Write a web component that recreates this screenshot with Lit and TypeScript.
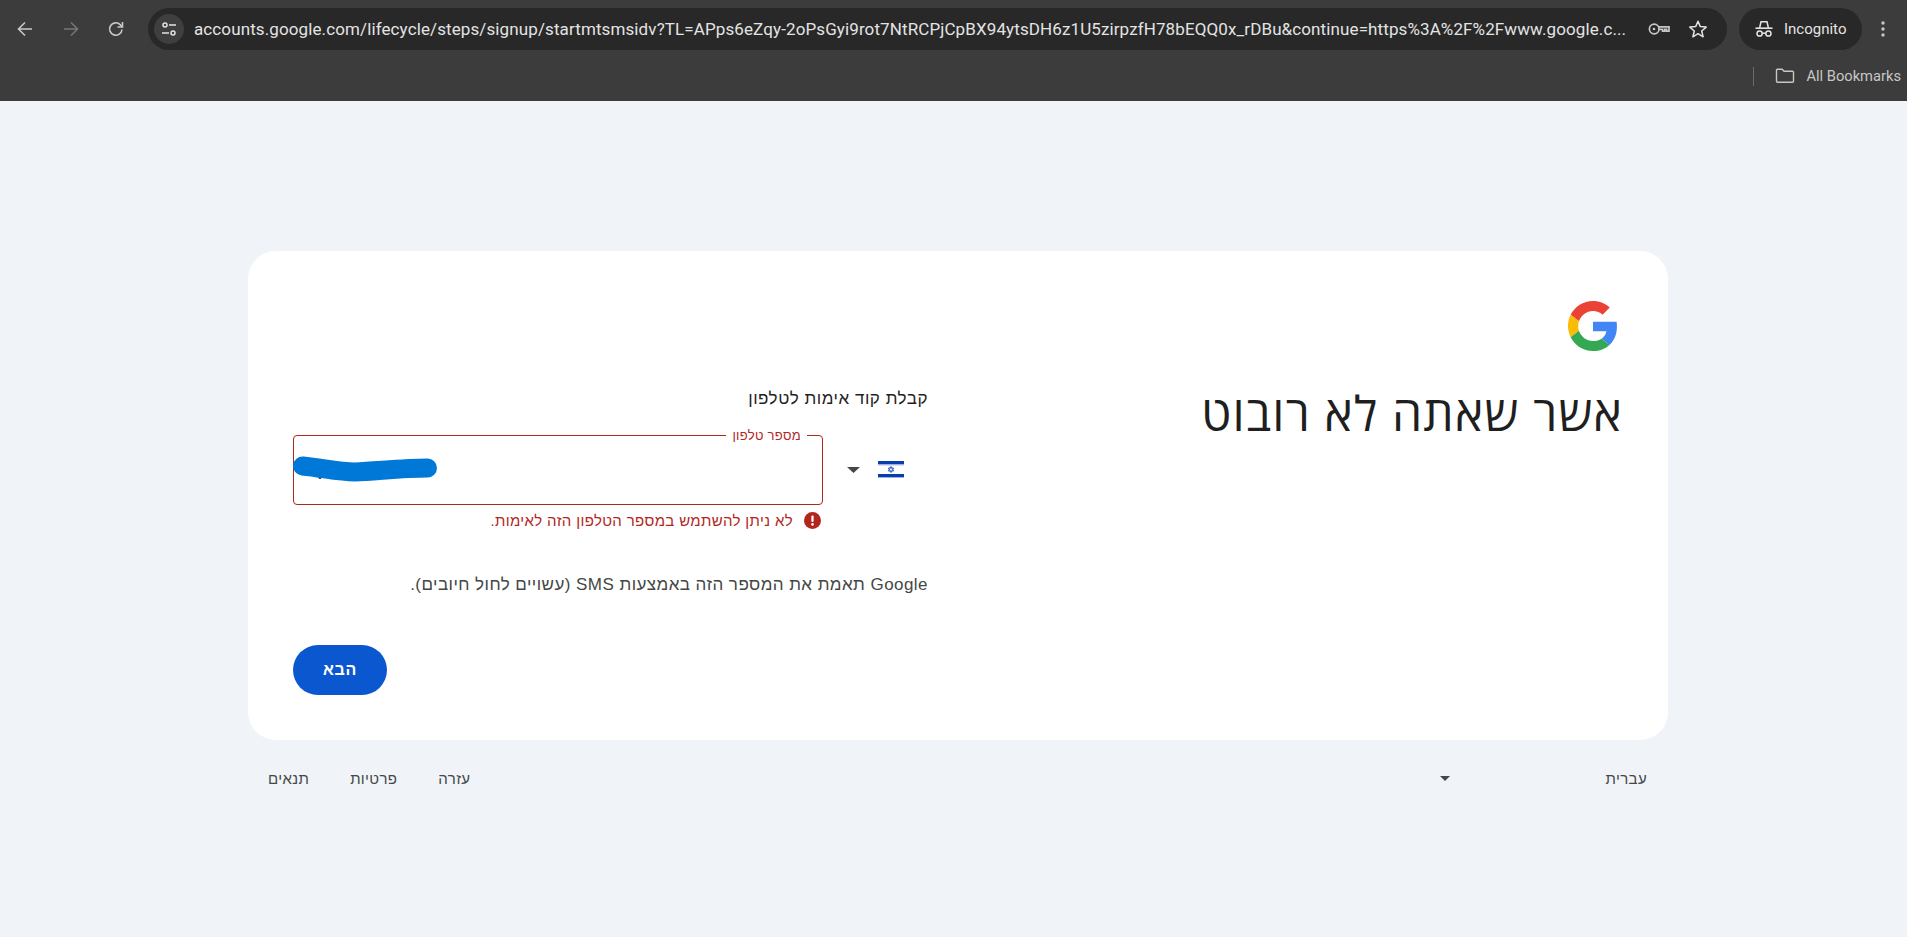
import { LitElement, html, css } from "lit";
import { customElement } from "lit/decorators.js";

const URL_TEXT =
  "accounts.google.com/lifecycle/steps/signup/startmtsmsidv?TL=APps6eZqy-2oPsGyi9rot7NtRCPjCpBX94ytsDH6z1U5zirpzfH78bEQQ0x_rDBu&continue=https%3A%2F%2Fwww.google.c...";

@customElement("app-root")
export class AppRoot extends LitElement {
  static styles = css`
    :host {
      display: block;
      min-height: 937px;
      background: #f0f4f9;
      font-family: "Liberation Sans", Arial, sans-serif;
      color: #1f1f1f;
    }
    svg { display: block; flex: none; }
    .chrome {
      height: 101px;
      background: #3c3c3c;
      box-sizing: border-box;
      padding-top: 8px;
      font-family: Roboto, "Open Sans", sans-serif;
    }
    .toolbar { display: flex; align-items: center; height: 42px; padding-left: 2.5px; }
    .nav { width: 45.5px; display: flex; justify-content: center; }
    .omnibox {
      margin-left: 9px;
      width: 1579px;
      height: 42px;
      border-radius: 21px;
      background: #282828;
      display: flex;
      align-items: center;
      box-sizing: border-box;
      padding: 0 19px 0 6px;
    }
    .chip {
      width: 30px; height: 30px; border-radius: 50%;
      background: #3f3f3f;
      display: flex; align-items: center; justify-content: center;
      flex: none;
    }
    .url {
      margin-left: 10px;
      flex: 1;
      font-size: 17px;
      letter-spacing: 0.11px;
      color: #e3e3e3;
      white-space: nowrap;
      overflow: hidden;
    }
    .omni-icons { display: flex; align-items: center; gap: 18px; }
    .incognito {
      margin-left: 12px;
      width: 123px; height: 42px;
      border-radius: 21px;
      background: #282828;
      display: flex; align-items: center;
      box-sizing: border-box;
      padding-left: 15px;
      gap: 10px;
      font-size: 15px;
      color: #e3e3e3;
      flex: none;
    }
    .dots { margin-left: 19px; }
    .bookmarks {
      display: flex; align-items: center; justify-content: flex-end;
      height: 26px; margin-top: 13px;
      font-size: 14.7px; color: #c7c7c7;
      padding-right: 6px;
    }
    .sep { width: 1px; height: 19px; background: #6b6b6b; margin-right: 21px; }
    .folder { margin-right: 11px; }

    .page { padding: 150px 239px 0 248px; }
    .card {
      background: #fff;
      border-radius: 28px;
      height: 489px;
      box-sizing: border-box;
      padding: 50px 47px 45px 45px;
      display: flex;
      flex-direction: column;
    }
    .logo { width: 50px; height: 50px; margin-right: 3px; }
    .columns { display: flex; justify-content: space-between; margin-top: 36px; }
    h1 {
      margin: 0 -2px 0 0;
      font-family: "Open Sans", "Liberation Sans", sans-serif;
      font-size: 48px;
      letter-spacing: 1.2px;
      line-height: 52px;
      font-weight: 400;
      color: #1f1f1f;
    }
    .form { width: 635px; flex: none; }
    .sub { font-size: 17px; letter-spacing: 0.52px; line-height: 24px; color: #1f1f1f; }
    .phone { display: flex; margin-top: 24px; height: 70px; }
    .country { width: 105px; flex: none; display: flex; align-items: center; padding-right: 24px; box-sizing: border-box; padding-bottom: 1px; }
    .caret { margin-right: 18px; }
    .field {
      flex: 1;
      border: 1px solid #b3261e;
      border-radius: 4px;
      position: relative;
      box-sizing: border-box;
    }
    .label {
      position: absolute;
      top: -8px;
      right: 15px;
      padding: 0 6px;
      background: #fff;
      font-size: 13px;
      letter-spacing: 0.3px;
      line-height: 15px;
      color: #b3261e;
      white-space: nowrap;
    }
    .scribble { position: absolute; left: -1px; top: 20px; }
    .error {
      display: flex; align-items: center; gap: 11px;
      margin-top: 6px;
      margin-right: 107px;
      height: 18px;
      font-size: 15px;
      letter-spacing: 0.35px;
      color: #b3261e;
    }
    .note { margin-top: 44px; font-size: 17px; letter-spacing: 0.45px; line-height: 24px; color: #444746; }
    .actions { margin-top: 48px; display: flex; justify-content: flex-end; }
    button {
      width: 94px; height: 50px;
      border: 0; border-radius: 25px;
      background: #0b57d0;
      color: #fff;
      font: 700 16px "Liberation Sans", Arial, sans-serif;
      letter-spacing: 0.6px;
    }
    .footer {
      display: flex; justify-content: space-between; align-items: center;
      height: 77px;
      font-size: 15px;
      letter-spacing: 0.35px;
      color: #444746;
      padding: 0 21px 0 20px;
    }
    .lang { display: flex; align-items: center; gap: 156px; }
    .links { display: flex; gap: 41px; }
  `;

  render() {
    return html`
      <div class="chrome">
        <div class="toolbar">
          <div class="nav">
            <svg width="18" height="18" viewBox="0 0 18 18" fill="none" stroke="#c7c7c7" stroke-width="1.6"><path d="M16 9H2.5M9 2.5 2.5 9 9 15.5"/></svg>
          </div>
          <div class="nav">
            <svg width="18" height="18" viewBox="0 0 18 18" fill="none" stroke="#757575" stroke-width="1.6"><path d="M2 9h13.5M9 2.5 15.5 9 9 15.5"/></svg>
          </div>
          <div class="nav">
            <svg width="18" height="18" viewBox="0 0 18 18" fill="none" stroke="#c7c7c7" stroke-width="1.6"><path d="M15 9.5A6.2 6.2 0 1 1 13.2 4.6L15.5 6.8"/><path d="M15.5 2v5h-5"/></svg>
          </div>
          <div class="omnibox">
            <div class="chip">
              <svg width="18" height="18" viewBox="0 0 18 18" fill="none" stroke="#e3e3e3" stroke-width="1.5"><circle cx="5" cy="5" r="2"/><path d="M9 5h7M2 13h7"/><circle cx="13" cy="13" r="2"/></svg>
            </div>
            <div class="url">${URL_TEXT}</div>
            <div class="omni-icons">
              <svg width="22" height="20" viewBox="0 0 22 20" fill="none" stroke="#c7c7c7" stroke-width="1.7"><circle cx="6.2" cy="10" r="4.8"/><circle cx="6" cy="10" r="1.3" fill="#c7c7c7" stroke="none"/><path d="M11 7.8h10v4.4h-2.4v-1.8h-1.8v1.8h-2.2v-1.8H11"/></svg>
              <svg width="20" height="20" viewBox="0 0 20 20" fill="none" stroke="#e3e3e3" stroke-width="1.5" stroke-linejoin="round"><path d="M10 2.2 12.3 7.6 18.2 8.1 13.7 12 15.1 17.8 10 14.7 4.9 17.8 6.3 12 1.8 8.1 7.7 7.6Z"/></svg>
            </div>
          </div>
          <div class="incognito">
            <svg width="20" height="20" viewBox="0 0 20 20" fill="none" stroke="#e3e3e3" stroke-width="1.5"><path d="M5.6 9 7 2.8h6L14.4 9"/><path d="M1.5 9.2h17" stroke-width="1.6"/><circle cx="5.6" cy="14.5" r="2.6"/><circle cx="14.4" cy="14.5" r="2.6"/><path d="M8.2 14.2h3.6"/></svg>
            <span>Incognito</span>
          </div>
          <svg class="dots" width="4" height="18" viewBox="0 0 4 18" fill="#c7c7c7"><circle cx="2" cy="3" r="1.7"/><circle cx="2" cy="9" r="1.7"/><circle cx="2" cy="15" r="1.7"/></svg>
        </div>
        <div class="bookmarks">
          <div class="sep"></div>
          <svg class="folder" width="20" height="18" viewBox="0 0 20 18" fill="none" stroke="#c7c7c7" stroke-width="1.4"><path d="M1.5 3.2c0-.6.4-1 1-1h4.6l2 2h8.4c.6 0 1 .4 1 1v9c0 .6-.4 1-1 1h-15c-.6 0-1-.4-1-1z"/></svg>
          <span>All Bookmarks</span>
        </div>
      </div>

      <div class="page">
        <div class="card" dir="rtl">
          <svg class="logo" viewBox="0 0 48 48">
            <path fill="#EA4335" d="M24 9.5c3.54 0 6.71 1.22 9.21 3.6l6.85-6.85C35.9 2.38 30.47 0 24 0 14.62 0 6.51 5.38 2.56 13.22l7.98 6.19C12.43 13.72 17.74 9.5 24 9.5z"/>
            <path fill="#4285F4" d="M46.98 24.55c0-1.57-.15-3.09-.38-4.55H24v9.02h12.94c-.58 2.96-2.26 5.48-4.78 7.18l7.73 6c4.51-4.18 7.09-10.36 7.09-17.65z"/>
            <path fill="#FBBC05" d="M10.53 28.59c-.48-1.45-.76-2.99-.76-4.59s.27-3.14.76-4.59l-7.98-6.19C.92 16.46 0 20.12 0 24c0 3.88.92 7.54 2.56 10.78l7.97-6.19z"/>
            <path fill="#34A853" d="M24 48c6.48 0 11.93-2.13 15.89-5.81l-7.73-6c-2.15 1.45-4.92 2.3-8.16 2.3-6.26 0-11.57-4.22-13.47-9.91l-7.98 6.19C6.51 42.62 14.62 48 24 48z"/>
          </svg>
          <div class="columns">
            <h1>אשר שאתה לא רובוט</h1>
            <div class="form">
              <div class="sub">קבלת קוד אימות לטלפון</div>
              <div class="phone">
                <div class="country">
                  <svg width="26" height="17" viewBox="0 0 26 17">
                    <rect width="26" height="17" fill="#fff"/>
                    <rect y="0" width="26" height="3.4" fill="#0a3dad"/>
                    <rect y="3.4" width="26" height="1" fill="#9db4e4"/>
                    <rect y="13" width="26" height="3" fill="#0a3dad"/>
                    <rect y="16" width="26" height="1" fill="#9db4e4"/>
                    <path d="M13 5.4 15.6 10H10.4ZM13 11.6 10.4 7H15.6Z" fill="none" stroke="#3a67c8" stroke-width="1"/>
                  </svg>
                  <svg class="caret" width="13" height="6" viewBox="0 0 13 6"><path d="M0 0h13L6.5 6z" fill="#444746"/></svg>
                </div>
                <div class="field">
                  <span class="label">מספר טלפון</span>
                  <svg class="scribble" width="148" height="30" viewBox="0 0 148 30" fill="none">
                    <circle cx="27" cy="21.5" r="1.5" fill="#333"/>
                    <path d="M9.5 10C30 12 45 16 62 16C85 15 110 12 134.5 12" stroke="#0078d7" stroke-width="19" stroke-linecap="round"/>
                  </svg>
                </div>
              </div>
              <div class="error">
                <svg width="17" height="17" viewBox="0 0 17 17"><circle cx="8.5" cy="8.5" r="8.5" fill="#b3261e"/><rect x="7.4" y="3.6" width="2.2" height="6.4" rx="1" fill="#fff"/><circle cx="8.5" cy="12.4" r="1.3" fill="#fff"/></svg>
                <span>לא ניתן להשתמש במספר הטלפון הזה לאימות.</span>
              </div>
              <div class="note">Google תאמת את המספר הזה באמצעות SMS (עשויים לחול חיובים).</div>
              <div class="actions"><button>הבא</button></div>
            </div>
          </div>
        </div>
        <div class="footer" dir="rtl">
          <div class="lang">
            <span>עברית</span>
            <svg width="10" height="5" viewBox="0 0 10 5"><path d="M0 0h10L5 5z" fill="#444746"/></svg>
          </div>
          <div class="links">
            <span>עזרה</span><span>פרטיות</span><span>תנאים</span>
          </div>
        </div>
      </div>
    `;
  }
}
